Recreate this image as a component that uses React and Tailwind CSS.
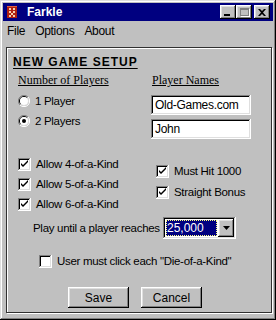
import React from 'react';

const RAISED =
  'shadow-[inset_-1px_-1px_#000,inset_1px_1px_#fff,inset_-2px_-2px_#808080,inset_2px_2px_#dfdfdf]';
const SUNKEN =
  'shadow-[inset_-1px_-1px_#fff,inset_1px_1px_#808080,inset_-2px_-2px_#dfdfdf,inset_2px_2px_#000]';

function DiceIcon() {
  return (
    <svg width="10" height="12" viewBox="0 0 10 12">
      <rect x="0" y="0" width="10" height="12" fill="#b02010" />
      <rect x="0" y="0" width="10" height="1" fill="#e06040" />
      {[[2, 2], [6, 2], [2, 5], [6, 5], [4, 7], [2, 9], [6, 9]].map(([x, y], i) => (
        <rect key={i} x={x} y={y} width="2" height="2" fill="#f4d0b0" />
      ))}
    </svg>
  );
}

function TitleButton({ children }) {
  return (
    <div className={`w-[16px] h-[14px] bg-[#c0c0c0] flex items-center justify-center ${RAISED}`}>
      {children}
    </div>
  );
}

function Checkbox({ checked }) {
  return (
    <div className={`w-[13px] h-[13px] bg-white flex-shrink-0 relative ${SUNKEN}`}>
      {checked && (
        <svg width="13" height="13" viewBox="0 0 13 13" className="absolute left-0 top-0">
          <path d="M3 5v2l2 2 5-5v-2l-5 5z" fill="#000" />
          <path d="M3 6l2 2 5-5" stroke="#000" strokeWidth="1" fill="none" />
        </svg>
      )}
    </div>
  );
}

function Radio({ checked }) {
  return (
    <svg width="12" height="12" viewBox="0 0 12 12" className="flex-shrink-0">
      <path d="M10 2A5.5 5.5 0 0 0 2 10" stroke="#808080" strokeWidth="1" fill="none" />
      <path d="M9.2 2.8A4.5 4.5 0 0 0 2.8 9.2" stroke="#000" strokeWidth="1" fill="none" />
      <path d="M2 10A5.5 5.5 0 0 0 10 2" stroke="#fff" strokeWidth="1" fill="none" />
      <path d="M2.8 9.2A4.5 4.5 0 0 0 9.2 2.8" stroke="#dfdfdf" strokeWidth="1" fill="none" />
      <circle cx="6" cy="6" r="4" fill="#fff" />
      {checked && <circle cx="6" cy="6" r="2" fill="#000" />}
    </svg>
  );
}

function CheckRow({ label, checked = true }) {
  return (
    <div className="flex items-center h-[13px]">
      <Checkbox checked={checked} />
      <span className="ml-[5px] whitespace-nowrap">{label}</span>
    </div>
  );
}

function NameInput({ value }) {
  return (
    <div className={`w-[100px] h-[20px] bg-white px-[4px] flex items-center ${SUNKEN}`}>
      <span className="text-[12px]">{value}</span>
    </div>
  );
}

export default function App() {
  return (
    <div
      className="w-[276px] h-[320px] bg-[#c0c0c0] p-[3px] flex flex-col text-black text-[11.5px] tracking-[-0.3px] shadow-[inset_-1px_-1px_#000,inset_1px_1px_#dfdfdf,inset_-2px_-2px_#808080,inset_2px_2px_#fff]"
      style={{ fontFamily: '"Liberation Sans", Arial, sans-serif' }}
    >
      {/* Title bar */}
      <div className="h-[18px] bg-[#000080] flex items-center pl-[4px] pr-[3px] tracking-normal">
        <DiceIcon />
        <span className="ml-[10px] text-white font-bold text-[12px]">Farkle</span>
        <div className="ml-auto flex items-center">
          <TitleButton>
            <div className="w-[6px] h-[2px] bg-black mt-[6px] -ml-[2px]" />
          </TitleButton>
          <TitleButton>
            <div className="w-[9px] h-[8px] border border-[#808080] border-t-2 shadow-[1px_1px_0_#fff]" />
          </TitleButton>
          <div className="ml-[2px]">
            <TitleButton>
              <svg width="8" height="7" viewBox="0 0 8 7">
                <path d="M0 0h2l2 2 2-2h2l-3 3.5 3 3.5h-2l-2-2-2 2h-2l3-3.5z" fill="#000" />
              </svg>
            </TitleButton>
          </div>
        </div>
      </div>

      {/* Menu bar */}
      <div className="h-[19px] flex items-center text-[12px] pl-[4px] gap-[10px]">
        <span>File</span>
        <span>Options</span>
        <span>About</span>
      </div>

      {/* Group frame */}
      <div className="mt-[7px] ml-[3px] w-[266px] h-[266px] border border-[#303030] shadow-[1px_1px_0_#fff,inset_1px_1px_0_#fff] flex flex-col">
        <div className="mt-[5px] ml-[6px]">
          <span className="font-bold text-[12px] tracking-[1px] underline underline-offset-[2px]">
            NEW GAME SETUP
          </span>
        </div>

        <div className="flex mt-[2px]">
          <div className="ml-[11px] w-[133px] flex flex-col">
            <span
              className="text-[12px] tracking-normal underline underline-offset-[1px] leading-[14px]"
              style={{ fontFamily: '"Liberation Serif", "Times New Roman", serif' }}
            >
              Number of Players
            </span>
            <div className="mt-[7px] flex items-center h-[14px]">
              <Radio />
              <span className="ml-[5px]">1 Player</span>
            </div>
            <div className="mt-[6px] flex items-center h-[14px]">
              <Radio checked />
              <span className="ml-[5px]">2 Players</span>
            </div>
          </div>
          <div className="flex flex-col">
            <span
              className="ml-[1px] text-[12px] tracking-normal underline underline-offset-[1px] leading-[14px]"
              style={{ fontFamily: '"Liberation Serif", "Times New Roman", serif' }}
            >
              Player Names
            </span>
            <div className="mt-[8px]">
              <NameInput value="Old-Games.com" />
            </div>
            <div className="mt-[4px]">
              <NameInput value="John" />
            </div>
          </div>
        </div>

        <div className="flex mt-[19px]">
          <div className="ml-[11px] w-[138px] flex flex-col gap-[7px]">
            <CheckRow label="Allow 4-of-a-Kind" />
            <CheckRow label="Allow 5-of-a-Kind" />
            <CheckRow label="Allow 6-of-a-Kind" />
          </div>
          <div className="mt-[7px] flex flex-col gap-[8px]">
            <CheckRow label="Must Hit 1000" />
            <CheckRow label="Straight Bonus" />
          </div>
        </div>

        <div className="flex items-center mt-[6px] ml-[26px]">
          <span className="w-[130px] whitespace-nowrap">Play until a player reaches</span>
          <div className={`w-[73px] h-[22px] bg-white flex items-center p-[2px] ${SUNKEN}`}>
            <div className="flex-1 h-full p-[1px]">
              <div className="h-full bg-[#000080] outline outline-1 outline-dotted outline-[#ffff80] -outline-offset-1 flex items-center pl-[1px]">
                <span className="text-white text-[12px] tracking-normal">25,000</span>
              </div>
            </div>
            <div className={`w-[16px] h-full bg-[#c0c0c0] flex items-center justify-center ${RAISED}`}>
              <svg width="7" height="4" viewBox="0 0 7 4">
                <path d="M0 0h7l-3.5 4z" fill="#000" />
              </svg>
            </div>
          </div>
        </div>

        <div className="flex items-center mt-[16px] ml-[32px] h-[13px]">
          <Checkbox />
          <span className="ml-[5px] whitespace-nowrap">User must click each "Die-of-a-Kind"</span>
        </div>

        <div className="flex mt-[19px] ml-[61px] gap-[12px]">
          <button className={`w-[61px] h-[21px] bg-[#c0c0c0] text-[12px] tracking-normal ${RAISED}`}>Save</button>
          <button className={`w-[61px] h-[21px] bg-[#c0c0c0] text-[12px] tracking-normal ${RAISED}`}>Cancel</button>
        </div>
      </div>
    </div>
  );
}
